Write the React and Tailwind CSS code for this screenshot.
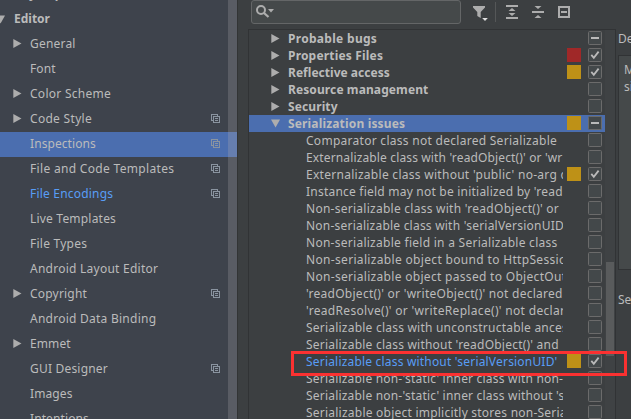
const sidebar = [
  { t: "General", arrow: true, ls: "tracking-[0.2px]" },
  { t: "Font", ls: "tracking-[0.1px]" },
  { t: "Color Scheme", arrow: true, ls: "tracking-[0.28px]" },
  { t: "Code Style", arrow: true, copy: true, ls: "tracking-[0.3px]" },
  { t: "Inspections", copy: true, selected: true, ls: "tracking-[0.08px]" },
  { t: "File and Code Templates", copy: true, ls: "tracking-[0.32px]" },
  { t: "File Encodings", copy: true, link: true, ls: "tracking-[0.2px]" },
  { t: "Live Templates", ls: "tracking-[0.2px]" },
  { t: "File Types", ls: "tracking-[0.25px]" },
  { t: "Android Layout Editor", ls: "tracking-[0.25px]" },
  { t: "Copyright", arrow: true, copy: true, ls: "tracking-[0.2px]" },
  { t: "Android Data Binding", ls: "tracking-[0.25px]" },
  { t: "Emmet", arrow: true, ls: "tracking-[0.1px]" },
  { t: "GUI Designer", copy: true, ls: "tracking-[0.2px]" },
  { t: "Images", ls: "tracking-[0.1px]" },
  { t: "Intentions", ls: "tracking-[0.1px]" },
];

const RED = "bg-[#a02828]";
const GOLD = "bg-[#be9117]";

const groups = [
  { t: "Probable bugs", state: "mixed", ls: "tracking-[0.3px]" },
  { t: "Properties Files", state: "on", swatch: RED, ls: "tracking-[0.18px]" },
  { t: "Reflective access", state: "on", swatch: GOLD, ls: "tracking-[0.03px]" },
  { t: "Resource management", ls: "tracking-[0.1px]" },
  { t: "Security", ls: "tracking-[0.1px]" },
  { t: "Serialization issues", state: "mixed", swatch: GOLD, open: true, ls: "tracking-[0.16px]" },
];

const items = [
  { t: "Comparator class not declared Serializable", ls: "tracking-[0.28px]" },
  { t: "Externalizable class with 'readObject()' or 'write", ls: "tracking-[0.14px]" },
  { t: "Externalizable class without 'public' no-arg c", ls: "tracking-[0.28px]", state: "on", swatch: GOLD },
  { t: "Instance field may not be initialized by 'read", ls: "tracking-[0.22px]" },
  { t: "Non-serializable class with 'readObject()' or", ls: "tracking-[0.26px]" },
  { t: "Non-serializable class with 'serialVersionUID", ls: "tracking-[0.22px]" },
  { t: "Non-serializable field in a Serializable class", ls: "tracking-[0.27px]" },
  { t: "Non-serializable object bound to HttpSession", ls: "tracking-[0.33px]" },
  { t: "Non-serializable object passed to ObjectOut", ls: "tracking-[0.31px]" },
  { t: "'readObject()' or 'writeObject()' not declared", ls: "tracking-[0.26px]" },
  { t: "'readResolve()' or 'writeReplace()' not declar", ls: "tracking-[0.32px]" },
  { t: "Serializable class with unconstructable ances", ls: "tracking-[0.22px]" },
  { t: "Serializable class without 'readObject()' and", ls: "tracking-[0.22px]" },
  { t: "Serializable class without 'serialVersionUID'", ls: "tracking-[0.19px]", state: "on", swatch: GOLD, link: true },
  { t: "Serializable non-'static' inner class with non-S", ls: "tracking-[0.2px]" },
  { t: "Serializable non-'static' inner class without 's", ls: "tracking-[0.2px]" },
  { t: "Serializable object implicitly stores non-Seria", ls: "tracking-[0.23px]" },
];

function Arrow({ open }) {
  return (
    <svg width="9" height="9" viewBox="0 0 9 9" className="shrink-0" fill="#adadad">
      {open ? <path d="M0 0.5h9L4.5 8.5z" /> : <path d="M0.3 0v9L8.5 4.5z" />}
    </svg>
  );
}

function CopyIcon() {
  return (
    <svg width="9" height="9" viewBox="0 0 9 9" fill="none" stroke="#8a94a0" shapeRendering="crispEdges">
      <path d="M2 6.5H.5v-6h6V2M2.5 2.5h6v6h-6zM4 4.5h3M4 6.5h3" />
    </svg>
  );
}

function Box({ state }) {
  return (
    <svg width="14" height="14" viewBox="0 0 14 14" className="shrink-0" fill="none">
      <rect x=".5" y=".5" width="13" height="13" rx="1" fill="#43484a" stroke="#6b6b6b" />
      {state === "on" && <path d="M3.3 6.8l2.5 3L10.6 3.6" stroke="#bababa" strokeWidth="1.8" />}
      {state === "mixed" && <path d="M3 7h8" stroke="#bababa" strokeWidth="2" />}
    </svg>
  );
}

function Marks({ swatch, state }) {
  return (
    <div className="mb-px ml-auto flex shrink-0 items-center gap-[7px] pr-[3px]">
      {swatch && <span className={`size-[14px] ${swatch}`} />}
      <Box state={state} />
    </div>
  );
}

function Toolbar() {
  return (
    <div className="flex h-[29px] items-start pl-[3px]">
      <div className="flex h-6 w-[210px] items-start rounded-[3px] border border-[#646667] bg-[#45494a] pl-[4px] pt-[4px]">
        <svg width="19" height="14" viewBox="0 0 19 14" fill="none">
          <circle cx="5" cy="5" r="4" stroke="#adadad" strokeWidth="2" />
          <path d="M8 8l4.5 4" stroke="#adadad" strokeWidth="2.3" />
          <path d="M12 4h6l-3 3.5z" fill="#adadad" />
        </svg>
      </div>
      <svg width="120" height="24" viewBox="462 0 120 24" className="ml-[1px]" fill="none">
        <path d="M473 6h12v1.5l-4.3 4.5v6l-3.4-2v-4L473 7.5z" fill="#adadad" />
        <path d="M482.2 18h5.6l-2.8 3z" fill="#dedede" />
        <path d="M495.5 2v20" stroke="#555758" />
        <path d="M506 6h12M506 18h12" stroke="#adadad" strokeWidth="2" />
        <path d="M508.5 11L512 8l3.5 3zM508.5 13l3.5 3 3.5-3z" fill="#adadad" />
        <path d="M532 12h12" stroke="#adadad" strokeWidth="2" />
        <path d="M534.5 6h7l-3.5 3zM534.5 18l3.5-3 3.5 3z" fill="#adadad" />
        <path d="M559 7h10v10h-10zM561 12h6" stroke="#adadad" strokeWidth="2" />
      </svg>
    </div>
  );
}

export default function App() {
  return (
    <div className="relative flex h-[419px] w-[631px] overflow-hidden bg-[#3c3f41] font-['Noto_Sans','Noto_Sans_CJK_SC',sans-serif] text-[12px] text-[#bbbbbb]">
      <aside className="flex w-[237px] shrink-0 bg-[#3e434c]">
        <div className="-mt-[18px] min-w-0 flex-1">
          <div className="flex h-[25px] items-center pb-0.5 pl-[14px] font-bold">Keymap</div>
          <div className="flex h-[25px] items-center pb-0.5 font-bold">
            <span className="-ml-1 mr-[9px] flex pt-0.5"><Arrow open /></span>
            Editor
          </div>
          {sidebar.map((r) => (
            <div key={r.t} className={`flex h-[25px] items-center pb-0.5 pl-[13px] pr-2 ${r.selected ? "bg-[#4b6eaf]" : ""}`}>
              <span className="w-[17px] shrink-0">{r.arrow && <Arrow />}</span>
              <span className={`whitespace-nowrap ${r.ls} ${r.link ? "text-[#589df6]" : ""}`}>{r.t}</span>
              {r.copy && <span className="ml-auto"><CopyIcon /></span>}
            </div>
          ))}
        </div>
        <div className="w-[9px] bg-[#595c64] pt-[132px]">
          <div className="h-[25px] bg-[#667eaf]" />
        </div>
      </aside>
      <div className="w-[11px] shrink-0 border-l border-[#323435]" />
      <main className="flex w-[368px] shrink-0 flex-col">
        <Toolbar />
        <div className="flex min-h-0 flex-1 border-x border-t border-[#313335]">
          <div className="w-[356px] shrink-0">
            {groups.map((g) => (
              <div key={g.t} className={`flex h-[17px] items-center pl-[22px] font-bold ${g.open ? "bg-[#4b6eaf]" : ""}`}>
                <Arrow open={g.open} />
                <span className={`ml-2 whitespace-nowrap ${g.ls}`}>{g.t}</span>
                <Marks swatch={g.swatch} state={g.state} />
              </div>
            ))}
            {items.map((g) => (
              <div key={g.t} className="flex h-[17px] items-center pl-[57px]">
                <span className={`w-[257px] overflow-hidden whitespace-nowrap leading-[17px] ${g.ls} ${g.link ? "text-[#589df6]" : ""}`}>{g.t}</span>
                <Marks swatch={g.swatch} state={g.state} />
              </div>
            ))}
          </div>
          <div className="w-[10px] bg-[#3f4244] pl-[1px] pt-[232px]">
            <div className="h-[94px] w-2 bg-[#595b5c]" />
          </div>
        </div>
      </main>
      <section className="flex min-w-0 flex-1 flex-col overflow-hidden pl-[2px] pt-[30px]">
        <div className="h-[25px] whitespace-nowrap leading-[17px]">Description</div>
        <div className="h-[215px] w-[60px] border border-[#313335] bg-[#45494a] pl-[5px] pt-[5px] leading-[17px]">
          <div>May</div>
          <div>since</div>
        </div>
        <div className="mt-[21px] leading-[17px]">Severity</div>
      </section>
      <div className="absolute left-[291px] top-[351px] h-[25px] w-[336px] border-[3px] border-[#fb3131]" />
    </div>
  );
}
